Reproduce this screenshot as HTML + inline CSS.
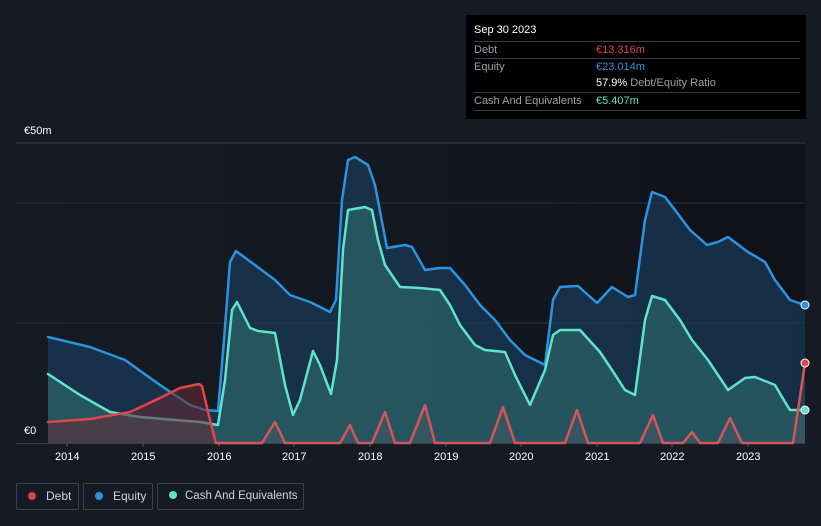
<!DOCTYPE html>
<html><head><meta charset="utf-8"><style>
body{margin:0;width:821px;height:526px;background:#151a24;font-family:"Liberation Sans",sans-serif;overflow:hidden;position:relative}
.t{position:absolute;font-size:11px;color:#fff}
.tip{position:absolute;left:466px;top:15px;width:340px;height:104px;background:#000;}
.row{position:absolute;left:8px;width:326px;font-size:11px;color:#9aa0a8;border-top:1px solid #3a3d42;height:17px;line-height:17px}
.leg{position:absolute;top:483px;height:27px;border:1px solid #3c424c;border-radius:2px;color:#d0d4da;font-size:12px;line-height:25px;box-sizing:border-box;white-space:nowrap}
.dot{display:inline-block;width:8px;height:8px;border-radius:50%;margin:0 10px 0 11px;vertical-align:0px}
</style></head><body>
<svg width="821" height="526" style="position:absolute;left:0;top:0">
<defs>
<linearGradient id="bg" x1="0" x2="1" y1="0" y2="0"><stop offset="0" stop-color="#151a23"/><stop offset="0.5" stop-color="#141820"/><stop offset="1" stop-color="#0e1117"/></linearGradient>
</defs>
<rect x="16" y="143" width="789" height="300" fill="url(#bg)"/>
<line x1="16" y1="143" x2="805" y2="143" stroke="#3b3f47"/>
<line x1="16" y1="203" x2="805" y2="203" stroke="#2c3038"/>
<line x1="16" y1="323" x2="805" y2="323" stroke="#2c3038"/>
<line x1="16" y1="443.5" x2="805" y2="443.5" stroke="#3b3f47"/>
<g stroke="#555" stroke-width="1">
<line x1="67" y1="443" x2="67" y2="447"/><line x1="143" y1="443" x2="143" y2="447"/><line x1="219" y1="443" x2="219" y2="447"/><line x1="294" y1="443" x2="294" y2="447"/><line x1="370" y1="443" x2="370" y2="447"/><line x1="446" y1="443" x2="446" y2="447"/><line x1="521" y1="443" x2="521" y2="447"/><line x1="597" y1="443" x2="597" y2="447"/><line x1="672" y1="443" x2="672" y2="447"/><line x1="748" y1="443" x2="748" y2="447"/>
</g>
<g stroke-linejoin="round" stroke-linecap="round">
<polygon fill="#1a3a5a" fill-opacity="0.7" points="48,337 90,347 125,360 160,385 190,405 205,410 218,411 224,340 230,262 236,251 255,265 275,280 290,295 310,302 330,312 336,300 342,200 348,160 355,157 368,165 375,185 387,248 405,245 412,247 425,270 440,268 450,268 465,285 480,305 495,320 510,340 525,355 545,365 553,300 560,287 578,286 597,303 612,287 628,297 635,295 645,220 652,192 665,197 675,210 690,230 707,245 718,242 728,237 748,252 765,262 775,280 790,300 805,305 805,443 48,443"/>
<polyline fill="none" stroke="#2b94e0" stroke-width="2.5" points="48,337 90,347 125,360 160,385 190,405 205,410 218,411 224,340 230,262 236,251 255,265 275,280 290,295 310,302 330,312 336,300 342,200 348,160 355,157 368,165 375,185 387,248 405,245 412,247 425,270 440,268 450,268 465,285 480,305 495,320 510,340 525,355 545,365 553,300 560,287 578,286 597,303 612,287 628,297 635,295 645,220 652,192 665,197 675,210 690,230 707,245 718,242 728,237 748,252 765,262 775,280 790,300 805,305"/>
<polygon fill="#2f6e6e" fill-opacity="0.6" points="48,374 80,395 110,412 140,417 175,420 200,422 218,425 225,380 232,310 237,302 250,328 258,331 275,333 285,385 293,415 300,400 313,351 320,365 331,394 337,360 343,250 348,210 365,207 372,210 378,240 385,265 400,287 420,288 440,290 450,305 460,325 475,345 485,350 505,352 515,375 530,405 545,370 553,335 560,330 580,330 600,352 612,370 625,390 635,395 645,320 652,296 665,300 680,320 692,340 708,360 718,375 728,390 745,378 755,377 775,385 785,402 790,410 805,410 805,443 48,443"/>
<polyline fill="none" stroke="#5ee3cc" stroke-width="2.5" points="48,374 80,395 110,412 140,417 175,420 200,422 218,425 225,380 232,310 237,302 250,328 258,331 275,333 285,385 293,415 300,400 313,351 320,365 331,394 337,360 343,250 348,210 365,207 372,210 378,240 385,265 400,287 420,288 440,290 450,305 460,325 475,345 485,350 505,352 515,375 530,405 545,370 553,335 560,330 580,330 600,352 612,370 625,390 635,395 645,320 652,296 665,300 680,320 692,340 708,360 718,375 728,390 745,378 755,377 775,385 785,402 790,410 805,410"/>
<polygon fill="#6a2a35" fill-opacity="0.55" points="48,422 90,419 130,412 160,398 180,388 199,384 202,386 210,420 216,443 48,443"/>
<polygon fill="#5a5a66" fill-opacity="0.35" points="262,443 275,422 285,443 340,443 350,425 358,443 372,443 385,412 395,443 410,443 425,405 435,443 490,443 503,407 515,443 565,443 577,410 588,443 640,443 653,415 663,443 683,443 692,432 700,443 718,443 730,418 742,443 793,443 805,363 805,443"/>
<polyline fill="none" stroke="#e0454d" stroke-width="2.5" points="48,422 90,419 130,412 160,398 180,388 199,384 202,386 210,420 216,443 262,443"/>
<polyline fill="none" stroke="#d6545c" stroke-width="2.5" points="216,443 262,443 275,422 285,443 340,443 350,425 358,443 372,443 385,412 395,443 410,443 425,405 435,443 490,443 503,407 515,443 565,443 577,410 588,443 640,443 653,415 663,443 683,443 692,432 700,443 718,443 730,418 742,443 793,443 805,363"/>
</g>
<circle cx="805" cy="305" r="4" fill="#2b94e0" stroke="#fff" stroke-width="1"/>
<circle cx="805" cy="363" r="4" fill="#e0454d" stroke="#fff" stroke-width="1"/>
<circle cx="805" cy="410" r="4" fill="#5ee3cc" stroke="#fff" stroke-width="1"/>
</svg>
<div class="t" style="left:24px;top:125px">€50m</div>
<div class="t" style="left:24px;top:425px">€0</div>
<div class="t" style="left:55px;top:451px">2014</div>
<div class="t" style="left:131px;top:451px">2015</div>
<div class="t" style="left:207px;top:451px">2016</div>
<div class="t" style="left:282px;top:451px">2017</div>
<div class="t" style="left:358px;top:451px">2018</div>
<div class="t" style="left:434px;top:451px">2019</div>
<div class="t" style="left:509px;top:451px">2020</div>
<div class="t" style="left:585px;top:451px">2021</div>
<div class="t" style="left:660px;top:451px">2022</div>
<div class="t" style="left:736px;top:451px">2023</div>
<div class="tip">
<div style="position:absolute;left:8px;top:9px;font-size:11px;color:#fff">Sep 30 2023</div>
<div class="row" style="top:26px">Debt<span style="position:absolute;left:122px;color:#e0454d">€13.316m</span></div>
<div class="row" style="top:43px">Equity<span style="position:absolute;left:122px;color:#2b94e0">€23.014m</span></div>
<div class="row" style="top:60px;border-top:none"><span style="position:absolute;left:122px;color:#fff">57.9% <span style="color:#9aa0a8">Debt/Equity Ratio</span></span></div>
<div class="row" style="top:77px">Cash And Equivalents<span style="position:absolute;left:122px;color:#5ee3cc">€5.407m</span></div>
<div style="position:absolute;left:8px;top:95px;width:326px;border-top:1px solid #3a3d42"></div>
</div>
<div class="leg" style="left:16px;width:63px"><span class="dot" style="background:#e0454d"></span>Debt</div>
<div class="leg" style="left:83px;width:70px"><span class="dot" style="background:#2b94e0"></span>Equity</div>
<div class="leg" style="left:157px;width:147px;font-size:11.5px"><span class="dot" style="background:#5ee3cc;margin-right:8px"></span>Cash And Equivalents</div>
</body></html>
